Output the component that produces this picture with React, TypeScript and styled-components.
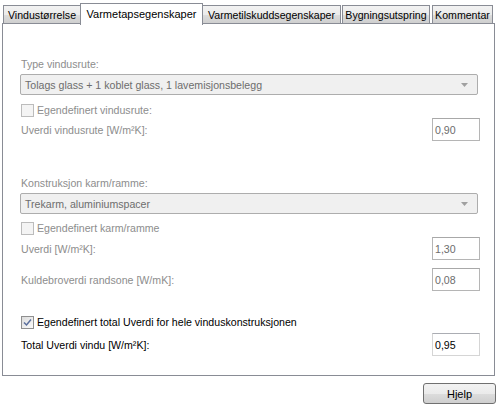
import React from "react";
import styled, { createGlobalStyle } from "styled-components";

const GlobalStyle = createGlobalStyle`
	html, body {
		margin: 0;
		padding: 0;
		background: #fff;
	}
	body {
		font-family: "Liberation Sans", Arial, sans-serif;
		font-size: 10.6px;
		color: #000;
	}
`;

const Window = styled.div`
	width: 503px;
	height: 412px;
	background: #fff;
	overflow: hidden;
`;

const TabStrip = styled.div`
	display: flex;
	align-items: flex-end;
	height: 24px;
	padding-left: 3px;
	position: relative;
	z-index: 1;
`;

const Tab = styled.div<{ $w: number; $ml: number; $active?: boolean }>`
	box-sizing: border-box;
	width: ${(p) => p.$w}px;
	margin-left: ${(p) => p.$ml}px;
	height: ${(p) => (p.$active ? 22 : 19)}px;
	margin-bottom: ${(p) => (p.$active ? -1 : 0)}px;
	border: 1px solid #898c95;
	border-bottom: ${(p) => (p.$active ? "none" : "1px solid #898c95")};
	background: ${(p) =>
		p.$active ? "#fff" : "linear-gradient(#f2f2f2 0%, #ebebeb 50%, #dddddd 51%, #cfcfcf 100%)"};
	display: flex;
	align-items: center;
	justify-content: center;
	padding-bottom: ${(p) => (p.$active ? 2 : 0)}px;
	white-space: nowrap;
	font-size: ${(p) => (p.$active ? "11px" : "10.6px")};
`;

const Panel = styled.div`
	box-sizing: border-box;
	margin-left: 2px;
	width: 493px;
	height: 353px;
	margin-top: -1px;
	border: 1px solid #898c95;
	padding: 0 14px 0 17px;
	display: flex;
	flex-direction: column;
`;

const Label = styled.div<{ $mt: number; $dim?: boolean }>`
	margin-top: ${(p) => p.$mt}px;
	margin-left: 1px;
	height: 14px;
	line-height: 14px;
	color: ${(p) => (p.$dim ? "#8d8d8d" : "#000")};
	white-space: nowrap;
`;

const Combo = styled.div<{ $mt: number }>`
	box-sizing: border-box;
	margin-top: ${(p) => p.$mt}px;
	margin-right: 2px;
	height: 21px;
	border: 1px solid #adadad;
	border-radius: 2px;
	background: #f0f0f0;
	display: flex;
	align-items: center;
	justify-content: space-between;
	padding: 0 9px 0 4px;
	color: #6d6d6d;
	white-space: nowrap;
`;

const CheckRow = styled.label<{ $mt: number; $dim?: boolean }>`
	margin-top: ${(p) => p.$mt}px;
	margin-left: 1px;
	height: 14px;
	display: flex;
	align-items: center;
	gap: 3px;
	color: ${(p) => (p.$dim ? "#8d8d8d" : "#000")};
	white-space: nowrap;
`;

const Box = styled.span<{ $dim?: boolean }>`
	box-sizing: border-box;
	width: 13px;
	height: 13px;
	border: 1px solid ${(p) => (p.$dim ? "#bcbcbc" : "#8f8f8f")};
	background: ${(p) => (p.$dim ? "#f4f4f4" : "linear-gradient(135deg, #dcdcdc, #fbfbfb)")};
	display: flex;
	align-items: center;
	justify-content: center;
`;

const FieldRow = styled.div<{ $mt: number; $dim?: boolean }>`
	margin-top: ${(p) => p.$mt}px;
	height: 23px;
	display: flex;
	align-items: center;
	justify-content: space-between;
	color: ${(p) => (p.$dim ? "#8d8d8d" : "#000")};
	white-space: nowrap;

	> span {
		margin-left: 1px;
	}
`;

const TextBox = styled.div<{ $dim?: boolean }>`
	box-sizing: border-box;
	width: 48px;
	height: 23px;
	border: 1px solid ${(p) => (p.$dim ? "#b5b5b5" : "#d5d5d5")};
	border-top-color: ${(p) => (p.$dim ? "#a8a8a8" : "#abadb3")};
	background: #fff;
	color: ${(p) => (p.$dim ? "#6d6d6d" : "#000")};
	padding: 0 2px;
	display: flex;
	align-items: center;
`;

const Footer = styled.div`
	display: flex;
	justify-content: flex-end;
	padding: 7px 7px 0 0;
`;

const Button = styled.button`
	box-sizing: border-box;
	width: 73px;
	height: 21px;
	border: 1px solid #707070;
	border-radius: 3px;
	background: linear-gradient(#f2f2f2 0%, #ebebeb 50%, #dddddd 51%, #cfcfcf 100%);
	font-family: "Liberation Sans", Arial, sans-serif;
	font-size: 11px;
	color: #000;
	padding: 0;
`;

const Arrow = () => (
	<svg width="7" height="4" viewBox="0 0 7 4">
		<path d="M0 0 H7 L3.5 4 Z" fill="#a0a0a0" />
	</svg>
);

const Check = () => (
	<svg width="9" height="9" viewBox="0 0 9 9">
		<path d="M1 4.5 L3.5 7 L8 1.5" fill="none" stroke="#5a6e9c" strokeWidth="1.5" />
	</svg>
);

const tabs = [
	{ title: "Vindustørrelse", w: 78, ml: 0 },
	{ title: "Varmetapsegenskaper", w: 123, ml: -1, active: true },
	{ title: "Varmetilskuddsegenskaper", w: 139, ml: -1 },
	{ title: "Bygningsutspring", w: 88, ml: 1 },
	{ title: "Kommentar", w: 61, ml: 2 },
];

export default function App() {
	return (
		<Window>
			<GlobalStyle />
			<TabStrip>
				{tabs.map((t) => (
					<Tab key={t.title} $w={t.w} $ml={t.ml} $active={t.active}>
						{t.title}
					</Tab>
				))}
			</TabStrip>
			<Panel>
				<Label $mt={33} $dim={true}>Type vindusrute:</Label>
				<Combo $mt={3}>
					<span>Tolags glass + 1 koblet glass, 1 lavemisjonsbelegg</span>
					<Arrow />
				</Combo>
				<CheckRow $mt={8} $dim={true}>
					<Box $dim={true} />
					Egendefinert vindusrute:
				</CheckRow>
				<FieldRow $mt={1} $dim={true}>
					<span>Uverdi vindusrute [W/m²K]:</span>
					<TextBox $dim={true}>0,90</TextBox>
				</FieldRow>

				<Label $mt={35} $dim={true}>Konstruksjon karm/ramme:</Label>
				<Combo $mt={3}>
					<span>Trekarm, aluminiumspacer</span>
					<Arrow />
				</Combo>
				<CheckRow $mt={7} $dim={true}>
					<Box $dim={true} />
					Egendefinert karm/ramme
				</CheckRow>
				<FieldRow $mt={2} $dim={true}>
					<span>Uverdi [W/m²K]:</span>
					<TextBox $dim={true}>1,30</TextBox>
				</FieldRow>
				<FieldRow $mt={8} $dim={true}>
					<span>Kuldebroverdi randsone [W/mK]:</span>
					<TextBox $dim={true}>0,08</TextBox>
				</FieldRow>

				<CheckRow $mt={24}>
					<Box>
						<Check />
					</Box>
					Egendefinert total Uverdi for hele vinduskonstruksjonen
				</CheckRow>
				<FieldRow $mt={4}>
					<span>Total Uverdi vindu [W/m²K]:</span>
					<TextBox>0,95</TextBox>
				</FieldRow>
			</Panel>
			<Footer>
				<Button>Hjelp</Button>
			</Footer>
		</Window>
	);
}
